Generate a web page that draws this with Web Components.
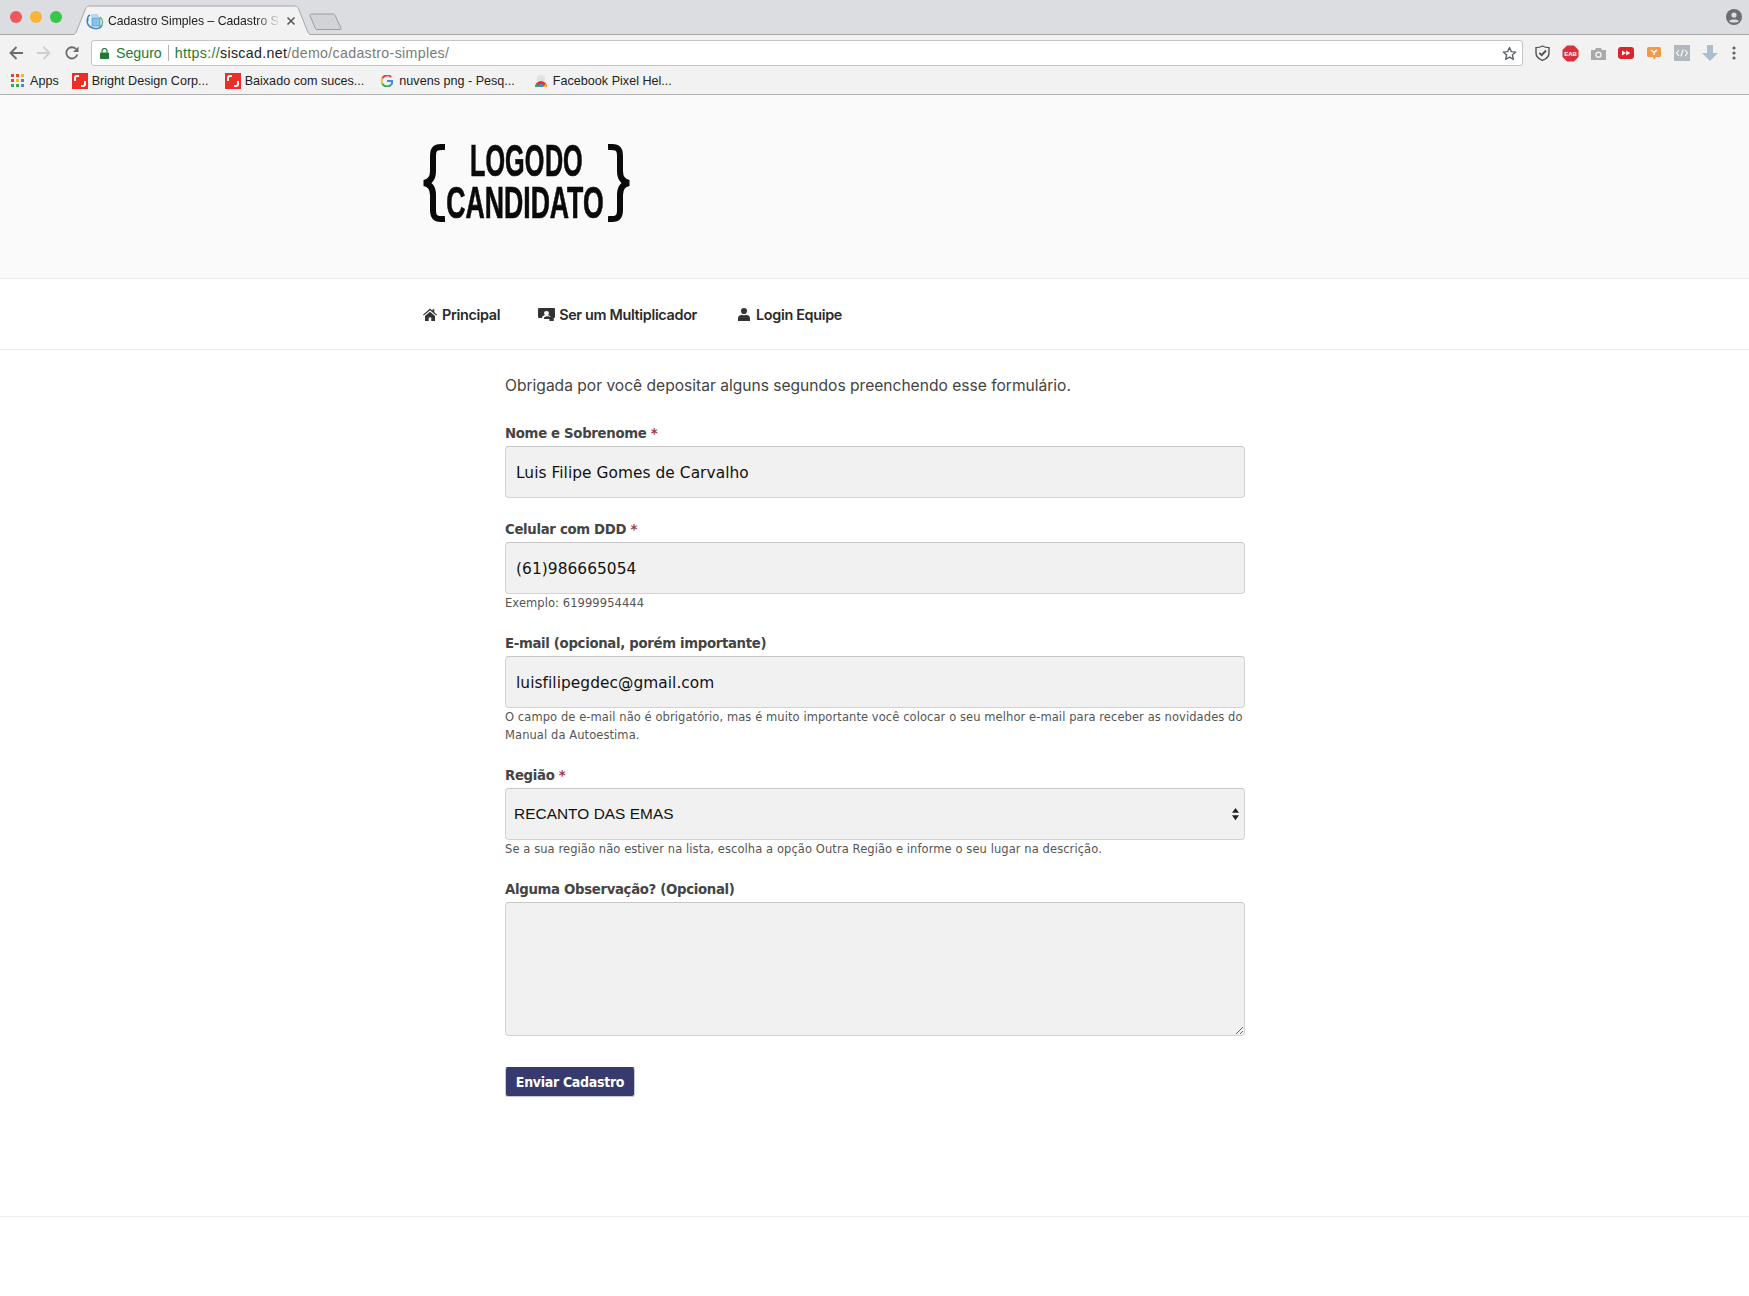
<!DOCTYPE html>
<html lang="pt-BR">
<head>
<meta charset="utf-8">
<title>Cadastro Simples</title>
<style>
  html, body { margin: 0; padding: 0; background: #fff; }
  body { font-family: "Liberation Sans", Arial, sans-serif; overflow: hidden; height: 1296px; }
</style>
</head>
<body>
<browser-chrome></browser-chrome>
<site-header></site-header>
<site-nav>
  <nav-link icon="home" gap="5">Principal</nav-link>
  <nav-link icon="board" gap="4">Ser um Multiplicador</nav-link>
  <nav-link icon="user" gap="6" style="margin-left:3px">Login Equipe</nav-link>
</site-nav>
<signup-form>
  <form-field label="Nome e Sobrenome" required value="Luis Filipe Gomes de Carvalho"></form-field>
  <form-field label="Celular com DDD" required value="(61)986665054">Exemplo: 61999954444</form-field>
  <form-field label="E-mail (opcional, porém importante)" value="luisfilipegdec@gmail.com">O campo de e-mail não é obrigatório, mas é muito importante você colocar o seu melhor e-mail para receber as novidades do Manual da Autoestima.</form-field>
  <form-field label="Região" required type="select" value="RECANTO DAS EMAS">Se a sua região não estiver na lista, escolha a opção Outra Região e informe o seu lugar na descrição.</form-field>
  <form-field label="Alguma Observação? (Opcional)" type="textarea"></form-field>
</signup-form>
<site-footer></site-footer>

<script>
const chromeTemplate = document.createElement('template');
chromeTemplate.innerHTML = `
  <style>
    :host { display: block; height: 95px; font-family: "Liberation Sans", Arial, sans-serif; color: #222; }
    svg { display: block; flex: none; }
    .tabs { height: 34px; background: #dcdde0; border-bottom: 1px solid #a6a6a6; position: relative; }
    .light { position: absolute; top: 11px; width: 12px; height: 12px; border-radius: 50%; }
    .tab-shape { position: absolute; left: 68px; top: 5px; }
    .favicon { position: absolute; left: 86px; top: 13px; }
    .tab-title { position: absolute; left: 108px; top: 13px; width: 173px; height: 16px; font-size: 12.2px; line-height: 16px; white-space: nowrap;
      -webkit-mask-image: linear-gradient(90deg, #000 85%, transparent); mask-image: linear-gradient(90deg, #000 85%, transparent); }
    .tab-close { position: absolute; left: 286px; top: 16px; }
    .new-tab { position: absolute; left: 308px; top: 13px; }
    .profile { position: absolute; left: 1726px; top: 9px; }
    .toolbar { box-sizing: border-box; height: 31px; background: #f2f2f2; display: flex; align-items: flex-start; padding: 5px 5px 0 9px; }
    .nav-btns { display: flex; gap: 14px; width: 82px; flex: none; padding-top: 6px; }
    .omnibox { width: 1432px; height: 26px; box-sizing: border-box; background: #fff; border: 1px solid #c4c4c4; border-radius: 3px; display: flex; align-items: center; padding-left: 8px; font-size: 14.2px; flex: none; }
    .seguro { color: #1e7b34; margin-left: 7px; padding-right: 6px; border-right: 1px solid #b5b5b5; line-height: 16px; }
    .url { margin-left: 6px; color: #7a7a7a; white-space: nowrap; letter-spacing: .33px; }
    .url b { font-weight: normal; color: #1e7b34; }
    .url i { font-style: normal; color: #222; }
    .star { margin-left: auto; margin-right: 5px; }
    .ext { display: flex; align-items: center; margin-left: 5px; height: 26px; }
    .ext > div { width: 28px; display: flex; justify-content: center; }
    .ext > div:last-child { width: 20px; }
    .bookmarks { box-sizing: border-box; height: 29px; background: #f2f2f2; border-bottom: 1px solid #aeaeae; display: flex; align-items: center; font-size: 12.6px; padding: 1px 0 0 11px; white-space: nowrap; }
    .bookmarks span { margin-left: 4px; }
  </style>
  <div class="tabs">
    <div class="light" style="left:10px;background:#f0565a"></div>
    <div class="light" style="left:30px;background:#f8b534"></div>
    <div class="light" style="left:50px;background:#35c748"></div>
    <svg class="tab-shape" width="248" height="30" viewBox="0 0 248 30">
      <path d="M2 30 C7 30 8 28 9 25 L17 5 C18 2 19 1 23 1 L225 1 C229 1 230 2 231 5 L239 25 C240 28 241 30 246 30" fill="#f2f2f2" stroke="#a6a6a6"/>
    </svg>
    <svg class="favicon" width="18" height="17" viewBox="0 0 18 17">
      <path d="M5 1 L12 1 L13 4 L5 4 Z" fill="#b9d7ec"/>
      <path d="M2 5 C0 9 2 14 7 15 C11 16.5 15 15 16 12" fill="none" stroke="#3d8fc4" stroke-width="1.6"/>
      <path d="M4 2 C1.5 3 1 6 2 8" fill="none" stroke="#2f7fb8" stroke-width="1.4"/>
      <rect x="6" y="5" width="8" height="8" fill="#8cc0e2" stroke="#4b9bd0" stroke-width=".8"/>
      <path d="M14 4 C16.5 6 17 9 16 12" fill="none" stroke="#6fb36a" stroke-width="1.4"/>
    </svg>
    <div class="tab-title">Cadastro Simples – Cadastro S</div>
    <svg class="tab-close" width="10" height="10" viewBox="0 0 10 10"><path d="M1.5 1.5 L8.5 8.5 M8.5 1.5 L1.5 8.5" stroke="#555" stroke-width="1.5"/></svg>
    <svg class="new-tab" width="36" height="18" viewBox="0 0 36 18"><path d="M2 2.5 C2 1.5 2.5 1 3.5 1 L25 1 C26 1 26.6 1.5 27 2.2 L33 15 C33.4 16 33 16.5 32 16.5 L9 16.5 C8 16.5 7.6 16 7.2 15.2 Z" fill="#d2d3d6" stroke="#9d9d9f"/></svg>
    <svg class="profile" width="16" height="16" viewBox="0 0 16 16"><circle cx="8" cy="8" r="8" fill="#6d6e71"/><circle cx="8" cy="6" r="2.6" fill="#dcdde0"/><path d="M3 12.2 C4 9.8 12 9.8 13 12.2 C11.5 14 4.5 14 3 12.2 Z" fill="#dcdde0"/></svg>
  </div>
  <div class="toolbar">
    <div class="nav-btns">
      <svg width="14" height="14" viewBox="0 0 14 14"><path d="M14 7 H2 M7.5 1 L1.5 7 L7.5 13" fill="none" stroke="#6b6b6b" stroke-width="1.8"/></svg>
      <svg width="14" height="14" viewBox="0 0 14 14"><path d="M0 7 H12 M6.5 1 L12.5 7 L6.5 13" fill="none" stroke="#cfcfcf" stroke-width="1.8"/></svg>
      <svg width="14" height="14" viewBox="0 0 14 14"><path d="M12.3 8.5 A5.6 5.6 0 1 1 11 3" fill="none" stroke="#6b6b6b" stroke-width="1.8"/><path d="M13.5 0.5 V6 H8 Z" fill="#6b6b6b"/></svg>
    </div>
    <div class="omnibox">
      <svg width="9" height="11" viewBox="0 0 9 11"><path d="M2 4.5 V3 A2.5 2.5 0 0 1 7 3 V4.5" fill="none" stroke="#1e7b34" stroke-width="1.2"/><rect y="4.5" width="9" height="6.5" rx=".8" fill="#1e7b34"/></svg>
      <div class="seguro">Seguro</div>
      <div class="url"><b>https://</b><i>siscad.net</i>/demo/cadastro-simples/</div>
      <svg class="star" width="15" height="15" viewBox="0 0 24 24"><path d="M12 2.5 L14.9 9 L22 9.7 L16.6 14.4 L18.2 21.4 L12 17.7 L5.8 21.4 L7.4 14.4 L2 9.7 L9.1 9 Z" fill="none" stroke="#5f6368" stroke-width="2.2" stroke-linejoin="round"/></svg>
    </div>
    <div class="ext">
      <div><svg width="15" height="16" viewBox="0 0 15 16"><path d="M7.5 1 C9.5 2.2 11.5 2.6 14 2.6 V8 C14 11.5 11 14 7.5 15.3 C4 14 1 11.5 1 8 V2.6 C3.5 2.6 5.5 2.2 7.5 1 Z" fill="none" stroke="#555" stroke-width="1.4"/><path d="M4.3 7.8 L6.7 10.2 L11 5.5" fill="none" stroke="#555" stroke-width="1.9"/></svg></div>
      <div><svg width="17" height="17" viewBox="0 0 17 17"><path d="M5 0.5 H12 L16.5 5 V12 L12 16.5 H5 L0.5 12 V5 Z" fill="#d8323c"/><text x="8.5" y="11" text-anchor="middle" font-family="Liberation Sans" font-weight="bold" font-size="6" fill="#fff">EAB</text></svg></div>
      <div><svg width="15" height="13" viewBox="0 0 15 13"><path d="M0 3 H4 L5 1 H10 L11 3 H15 V13 H0 Z" fill="#a9a9a9"/><circle cx="7.5" cy="7.7" r="3.2" fill="#f2f2f2"/><circle cx="7.5" cy="7.7" r="1.8" fill="#a9a9a9"/></svg></div>
      <div><svg width="16" height="12" viewBox="0 0 16 12"><rect width="16" height="12" rx="3" fill="#d9262c"/><path d="M4 3.5 L8 6 L4 8.5 Z M8.2 3.5 L12.2 6 L8.2 8.5 Z" fill="#fff"/></svg></div>
      <div><svg width="14" height="13" viewBox="0 0 14 13"><path d="M1.5 0 H12.5 Q14 0 14 1.5 V8.5 Q14 10 12.5 10 H9 L7 13 L6 10 H1.5 Q0 10 0 8.5 V1.5 Q0 0 1.5 0 Z" fill="#f29a4a"/><path d="M4 3 L7 5.6 L10 3 M7 5.6 V8" fill="none" stroke="#fff" stroke-width="1.3"/></svg></div>
      <div><svg width="16" height="16" viewBox="0 0 16 16"><rect width="16" height="16" fill="#b3b8c0"/><path d="M5 5 L2.5 8 L5 11 M11 5 L13.5 8 L11 11 M9.2 4.5 L6.8 11.5" fill="none" stroke="#fff" stroke-width="1.1"/></svg></div>
      <div><svg width="16" height="16" viewBox="0 0 16 16"><path d="M5 0 H11 V8 H16 L8 16 L0 8 H5 Z" fill="#a9c0cc"/></svg></div>
      <div><svg width="4" height="14" viewBox="0 0 4 14"><circle cx="2" cy="2" r="1.6" fill="#5f6368"/><circle cx="2" cy="7" r="1.6" fill="#5f6368"/><circle cx="2" cy="12" r="1.6" fill="#5f6368"/></svg></div>
    </div>
  </div>
  <div class="bookmarks">
    <svg width="13" height="13" viewBox="0 0 13 13" style="margin-right:2px">
      <rect width="3" height="3" fill="#ea4335"/><rect x="5" width="3" height="3" fill="#ea4335"/><rect x="10" width="3" height="3" fill="#fbbc05"/>
      <rect y="5" width="3" height="3" fill="#ea4335"/><rect x="5" y="5" width="3" height="3" fill="#fbbc05"/><rect x="10" y="5" width="3" height="3" fill="#4285f4"/>
      <rect y="10" width="3" height="3" fill="#34a853"/><rect x="5" y="10" width="3" height="3" fill="#34a853"/><rect x="10" y="10" width="3" height="3" fill="#4285f4"/>
    </svg>
    <span>Apps</span>
    <svg width="16" height="16" viewBox="0 0 16 16" style="margin-left:13px"><rect width="16" height="16" fill="#ee2d24"/><path d="M3 8 V5 Q3 3 5 3 H7 M13 8 V11 Q13 13 11 13 H9" fill="none" stroke="#fff" stroke-width="2"/></svg>
    <span>Bright Design Corp...</span>
    <svg width="16" height="16" viewBox="0 0 16 16" style="margin-left:16px"><rect width="16" height="16" fill="#ee2d24"/><path d="M3 8 V5 Q3 3 5 3 H7 M13 8 V11 Q13 13 11 13 H9" fill="none" stroke="#fff" stroke-width="2"/></svg>
    <span>Baixado com suces...</span>
    <svg width="12" height="12" viewBox="0 0 12 12" style="margin-left:17px;margin-right:2px">
      <path d="M10.2 2.2 A5.4 5.4 0 0 0 1.3 3.4" fill="none" stroke="#ea4335" stroke-width="2"/>
      <path d="M1.3 3.4 A5.4 5.4 0 0 0 1.3 8.6" fill="none" stroke="#fbbc05" stroke-width="2"/>
      <path d="M1.3 8.6 A5.4 5.4 0 0 0 9.8 10" fill="none" stroke="#34a853" stroke-width="2"/>
      <path d="M9.8 10 A5.4 5.4 0 0 0 11.4 6 H6" fill="none" stroke="#4285f4" stroke-width="2"/>
    </svg>
    <span>nuvens png - Pesq...</span>
    <svg width="12" height="14" viewBox="0 0 12 14" style="margin-left:20px;margin-right:2px">
      <path d="M2 4 V7 H10 V4 Q10 1 6 1 Q2 1 2 4 Z" fill="#e2e2e2"/>
      <path d="M0 13 A6 6 0 0 1 12 13 Z" fill="#e5342b"/>
      <path d="M3 13 A3 3 0 0 1 9 13 Z" fill="#4285f4"/>
      <path d="M8 13 L12 13 L11 9.5 Z" fill="#fbbc05"/>
      <path d="M0 13 L4 13 L1.5 9.5 Z" fill="#34a853"/>
    </svg>
    <span>Facebook Pixel Hel...</span>
  </div>`;

class BrowserChrome extends HTMLElement {
  constructor() {
    super();
    this.attachShadow({mode: 'open'});
    this.shadowRoot.appendChild(chromeTemplate.content.cloneNode(true));
  }
}
customElements.define('browser-chrome', BrowserChrome);

const headerTemplate = document.createElement('template');
headerTemplate.innerHTML = `
  <style>
    :host { display: block; box-sizing: border-box; height: 184px; background: #fafafa; border-bottom: 1px solid #ececec; padding-top: 49px; }
    .logo { width: 903px; margin: 0 auto; display: flex; height: 78px; }
    svg { flex: none; display: block; }
    .brace-left { margin-left: -1px; }
    .words { width: 163px; font-family: "Liberation Sans", Arial, sans-serif; font-weight: bold; color: #0a0a0a; font-size: 44px; line-height: 42px; -webkit-text-stroke: .7px #0a0a0a; }
    .line { display: flex; justify-content: center; height: 42px; margin-top: -4px; margin-left: -3px; }
    .line span { flex: none; transform: scaleX(.605); white-space: nowrap; }
    .line.top { margin-left: -1px; }
    .line.top span { transform: scaleX(.572); word-spacing: -11px; }
    .line + .line { margin-top: 0; }
  </style>
  <div class="logo">
    <svg class="brace-left" width="23" height="78" viewBox="0 0 23 78"><path d="M23 3 C14 2.5 11 4 11 12 V27 C11 34 8 38 2 39 C8 40 11 44 11 51 V66 C11 74 14 75.5 23 75" fill="none" stroke="#0a0a0a" stroke-width="6"/></svg>
    <div class="words">
      <div class="line top"><span>LOGO DO</span></div>
      <div class="line"><span>CANDIDATO</span></div>
    </div>
    <svg width="24" height="78" viewBox="0 0 24 78"><path d="M0 3 C9 2.5 12 4 12 12 V27 C12 34 15 38 21 39 C15 40 12 44 12 51 V66 C12 74 9 75.5 0 75" fill="none" stroke="#0a0a0a" stroke-width="6"/></svg>
  </div>`;

class SiteHeader extends HTMLElement {
  constructor() {
    super();
    this.attachShadow({mode: 'open'});
    this.shadowRoot.appendChild(headerTemplate.content.cloneNode(true));
  }
}
customElements.define('site-header', SiteHeader);

const navTemplate = document.createElement('template');
navTemplate.innerHTML = `
  <style>
    :host { display: block; height: 71px; box-sizing: border-box; border-bottom: 1px solid #ececec; }
    .wrap { width: 903px; margin: 0 auto; height: 70px; display: flex; align-items: center; gap: 38px; }
  </style>
  <div class="wrap"><slot></slot></div>`;

class SiteNav extends HTMLElement {
  constructor() {
    super();
    this.attachShadow({mode: 'open'});
    this.shadowRoot.appendChild(navTemplate.content.cloneNode(true));
  }
}
customElements.define('site-nav', SiteNav);

const navIcons = {
  home: '<svg width="14" height="13" viewBox="0 0 14 13"><path d="M7 .5 L9.5 2.7 V1.2 H11.3 V4.3 L14 6.7 L13.2 7.6 L7 2.2 L.8 7.6 L0 6.7 Z" fill="#333"/><path d="M2 8 L7 3.7 L12 8 V13 H8.3 V9.4 H5.7 V13 H2 Z" fill="#333"/></svg>',
  board: '<svg width="17" height="13" viewBox="0 0 17 13"><path d="M1 0 H16 Q17 0 17 1 V9 Q17 10 16 10 H13 Q13 8 11 7.6 L10 7 Q11 6 11 5 Q11 3 8.5 3 Q6 3 6 5 Q6 6 7 7 L5 8 Q4 8.5 4 10 H1 Q0 10 0 9 V1 Q0 0 1 0 Z" fill="#333"/><path d="M8.2 8.2 L10.5 8.2 L13 9.4 V11 H6 V9.4 Z M11.5 8.5 H15.5 L15.8 12 A2.2 2.2 0 0 1 11.4 12 Z" fill="#333"/></svg>',
  user: '<svg width="12" height="13" viewBox="0 0 13 14"><circle cx="6.5" cy="3.3" r="3.3" fill="#333"/><path d="M0 14 V11 C0 8.5 2 7.6 4 7.2 C5 8 8 8 9 7.2 C11 7.6 13 8.5 13 11 V14 Z" fill="#333"/></svg>'
};

class NavLink extends HTMLElement {
  constructor() {
    super();
    this.attachShadow({mode: 'open'});
    const gap = this.getAttribute('gap') || 6;
    this.shadowRoot.innerHTML = `
      <style>
        :host { display: flex; align-items: center; gap: ${gap}px; font-family: "Inter", "Liberation Sans", sans-serif; font-weight: 600; font-size: 14.4px; letter-spacing: -.32px; color: #2a2a2a; white-space: nowrap; }
        svg { display: block; flex: none; }
      </style>
      ${navIcons[this.getAttribute('icon')] || ''}<slot></slot>`;
  }
}
customElements.define('nav-link', NavLink);

const signupTemplate = document.createElement('template');
signupTemplate.innerHTML = `
  <style>
    :host { display: block; width: 740px; margin-left: 505px; height: 866px; box-sizing: border-box; padding-top: 24px; }
    p { margin: 0 0 26px; font-family: "Inter", "Liberation Sans", sans-serif; font-size: 15.6px; line-height: 24px; letter-spacing: -.01px; color: #444; white-space: nowrap; }
    .fields { display: flex; flex-direction: column; gap: 22px; }
    button { display: block; margin-top: 31px; width: 130px; height: 30px; padding: 0; border: 1px solid #c9c9d3; border-top-color: #373a6d; border-radius: 3px; background: #373a6d; color: #fff; font-family: "DejaVu Sans", sans-serif; font-stretch: condensed; font-weight: bold; font-size: 14px; letter-spacing: -.3px; }
  </style>
  <p>Obrigada por você depositar alguns segundos preenchendo esse formulário.</p>
  <div class="fields"><slot></slot></div>
  <button type="button">Enviar Cadastro</button>`;

class SignupForm extends HTMLElement {
  constructor() {
    super();
    this.attachShadow({mode: 'open'});
    this.shadowRoot.appendChild(signupTemplate.content.cloneNode(true));
  }
}
customElements.define('signup-form', SignupForm);

const fieldStyles = `
  :host { display: block; font-family: "DejaVu Sans", sans-serif; }
  label { display: block; height: 18px; margin-bottom: 4px; font-size: 13.3px; line-height: 20px; font-weight: bold; color: #444; letter-spacing: -.33px; white-space: nowrap; }
  label em { font-style: normal; color: #a33a3a; }
  .control { box-sizing: border-box; height: 52px; background: #f1f1f1; border: 1px solid #d2d2d2; border-top-color: #c6c6c6; border-radius: 4px; padding: 2px 10px 0; display: flex; align-items: center; font-size: 15.4px; letter-spacing: .05px; color: #111; }
  .select { padding: 0 5px 0 8px; font-family: "Liberation Sans", sans-serif; font-size: 15.4px; justify-content: space-between; }
  .select svg { display: block; }
  textarea { display: block; box-sizing: border-box; width: 740px; height: 134px; margin: 0; padding: 10px; background: #f1f1f1; border: 1px solid #d2d2d2; border-top-color: #c6c6c6; border-radius: 4px; outline: none; }
  .help { font-size: 11.5px; line-height: 18px; color: #555; letter-spacing: .08px; }
`;

class FormField extends HTMLElement {
  constructor() {
    super();
    this.attachShadow({mode: 'open'});
    const type = this.getAttribute('type') || 'text';
    const star = this.hasAttribute('required') ? ' <em>*</em>' : '';
    const value = this.getAttribute('value') || '';
    let control = `<div class="control" role="textbox">${value}</div>`;
    if (type === 'select') {
      control = `<div class="control select" role="combobox"><span>${value}</span>
        <svg width="7" height="14" viewBox="0 0 8 14"><path d="M4 0 L8 5.5 H0 Z M0 8.5 H8 L4 14 Z" fill="#222"/></svg></div>`;
    } else if (type === 'textarea') {
      control = '<textarea></textarea>';
    }
    this.shadowRoot.innerHTML = `
      <style>${fieldStyles}</style>
      <label>${this.getAttribute('label')}${star}</label>
      ${control}
      <div class="help"><slot></slot></div>`;
    if (!this.textContent.trim()) this.shadowRoot.querySelector('.help').style.display = 'none';
  }
}
customElements.define('form-field', FormField);

class SiteFooter extends HTMLElement {
  constructor() {
    super();
    this.attachShadow({mode: 'open'});
    this.shadowRoot.innerHTML = `
      <style>:host { display: block; height: 80px; box-sizing: border-box; border-top: 1px solid #ececec; }</style>`;
  }
}
customElements.define('site-footer', SiteFooter);
</script>
</body>
</html>
